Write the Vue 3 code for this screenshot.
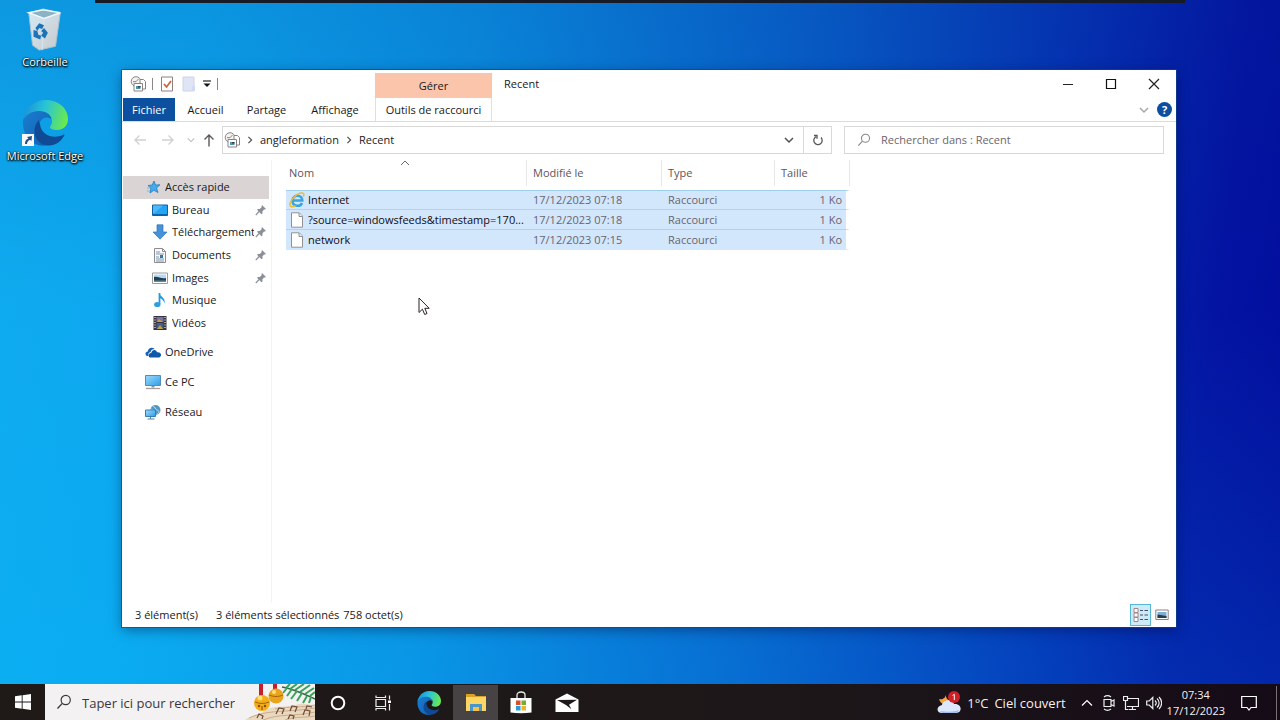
<script setup>
import { ref } from 'vue'

const tabs = ['Accueil', 'Partage', 'Affichage']
const quick = [
  { name: 'Accès rapide', icon: 'star', root: true, active: true },
  { name: 'Bureau', icon: 'desktop', pin: true },
  { name: 'Téléchargements', icon: 'download', pin: true },
  { name: 'Documents', icon: 'document', pin: true },
  { name: 'Images', icon: 'picture', pin: true },
  { name: 'Musique', icon: 'music' },
  { name: 'Vidéos', icon: 'video' }
]
const places = [
  { name: 'OneDrive', icon: 'onedrive' },
  { name: 'Ce PC', icon: 'pc' },
  { name: 'Réseau', icon: 'network' }
]
const files = [
  { name: 'Internet', icon: 'ie', date: '17/12/2023 07:18', type: 'Raccourci', size: '1 Ko' },
  { name: '?source=windowsfeeds&timestamp=170...', icon: 'file', date: '17/12/2023 07:18', type: 'Raccourci', size: '1 Ko' },
  { name: 'network', icon: 'file', date: '17/12/2023 07:15', type: 'Raccourci', size: '1 Ko' }
]
const folderQuery = ref('')
const webQuery = ref('')
</script>

<template>
  <div class="screen">
    <svg class="sprite" aria-hidden="true">
      <defs>
        <linearGradient id="edgeTop" x1="0" y1=".3" x2="1" y2=".5">
          <stop offset="0" stop-color="#1a8fd8" /><stop offset=".45" stop-color="#27c3d8" /><stop offset="1" stop-color="#6bea4c" />
        </linearGradient>
        <linearGradient id="edgeMid" x1="0" y1="0" x2="1" y2="1">
          <stop offset="0" stop-color="#1b7fd0" /><stop offset="1" stop-color="#0f5fb4" />
        </linearGradient>
        <linearGradient id="screenBlue" x1="0" y1="0" x2="1" y2="1">
          <stop offset="0" stop-color="#9adcff" /><stop offset="1" stop-color="#2f9de6" />
        </linearGradient>
        <linearGradient id="binSide" x1="0" y1="0" x2="1" y2="1">
          <stop offset="0" stop-color="#d5ecf7" /><stop offset="1" stop-color="#c7c9cc" />
        </linearGradient>
      </defs>
      <symbol id="edge" viewBox="0 0 46 46">
        <path fill="url(#edgeMid)" d="M1 20C3 11 11 7 18 8c8 1 12 6 11 11-4-3-9-1-11 3-4 8 0 17 9 22-2 2-7 2-11 1C6 42 0 32 1 20z" />
        <path fill="url(#edgeTop)" d="M1 20C3 8 12 0 24 0c13 0 22 9 22 19 0 7-5 11-11 11-4 0-7-1-7-3 0-1 2-2 2-6 0-6-6-10-13-10C9 11 4 15 1 20z" />
        <path fill="#114a94" d="M17 20c-8 8-5 22 6 25 8 2 15-2 19-9 1-1 0-2-1-1-9 4-22 1-23-11-1-2-1-3-1-4z" />
      </symbol>
      <symbol id="recent" viewBox="0 0 16 16">
        <circle cx="6" cy="5.5" r="4.8" fill="#f5f3f2" stroke="#8a8280" /><path d="M6 5.7 8.500 3M6 5.700H3" stroke="#8a8280" fill="none" />
        <path d="M10 3.500h3.500l2 2V13H10z" fill="#fff" stroke="#8a8280" /><path d="M4 7.500h8.500v7.500H4z" fill="#fff" stroke="#8a8280" />
        <path d="M6 10h4.500v3H6z" fill="#4e98ad" /><path d="M8 10h2.500v1.500H8z" fill="#323c54" />
      </symbol>
      <symbol id="star" viewBox="0 0 16 16"><path d="m9 2 1.500 4 4.500-.2-3.500 3.200 1.500 4.500-4.200-2.200L5 14l.9-4.700L3 6.500l4.200-.5z" fill="#45a9ee" stroke="#1e7fc4" stroke-width=".8" /><path d="M2 9h3M2 12h3" stroke="#75bdec" /></symbol>
      <symbol id="desktop" viewBox="0 0 16 16"><path d="M.5 3h15v10.500H.5z" fill="#24a4f5" stroke="#145f9f" /><path d="M1 12h14v1.500H1z" fill="#0c65a8" /><path d="m1 3.500 10 0-9 8H1z" fill="#4db8fa" /></symbol>
      <symbol id="download" viewBox="0 0 16 16"><path d="M5 .8h6V8h4l-7 7.200L1 8h4z" fill="#4593d8" stroke="#2b74b9" stroke-width=".7" /></symbol>
      <symbol id="document" viewBox="0 0 16 16"><path d="M2.500 1.500h8l3 3v11h-11z" fill="#fafafa" stroke="#8d8b8d" /><path d="M10.500 1.500v3h3" fill="none" stroke="#8d8b8d" /><path d="M4 5h4M4 7h8M4 10h3M4 12h8M4 14h8" stroke="#7796ad" /><path d="M8 8h3v3H8z" fill="#3b77a3" /></symbol>
      <symbol id="picture" viewBox="0 0 16 16"><path d="M.5 3h15v10.500H.5z" fill="#fff" stroke="#9c9a9b" /><path d="M2 4.500h12v7.500H2z" fill="#b6dcf4" /><path d="M2 7c4-1 7 2 12 1v4H2z" fill="#263d58" /><path d="M2 10.500h12V12H2z" fill="#53938e" /></symbol>
      <symbol id="music" viewBox="0 0 16 16"><path d="M7.500 1v11" stroke="#209be2" stroke-width="1.800" /><ellipse cx="5.300" cy="12.500" rx="3.200" ry="2.600" fill="#2f9fe3" /><path d="M7 .5c0 4 7 4.500 5.500 11C11.500 8 10 6.500 7 6z" fill="#2299df" /></symbol>
      <symbol id="video" viewBox="0 0 16 16"><path d="M1.500 1h13v14h-13z" fill="#35343d" /><path d="M4.500 2h7v5h-7z" fill="#7b6eaf" /><path d="M4.500 8h7v6h-7z" fill="#405f8e" /><path d="m5 14 3-4 3 4M5 7l2-3 4 3" fill="#c4a046" /><path d="M3 2v12M13 2v12" stroke="#ddd" stroke-width="1.300" stroke-dasharray="1 1.500" /></symbol>
      <symbol id="onedrive" viewBox="0 0 16 16"><path d="M2.500 12C-.3 11.500-.1 7.600 2.800 7.600 3 4 7 2.300 9.800 5c-2.500 0-3.900 1.300-4.200 3C3.500 8.500 3 10.500 3.500 12z" fill="#1762b4" /><path d="M5 13.500c-2.300-.8-1.600-4.500 1.200-4.500C7 5.500 11 5 12 8.300c4.500-.8 5.300 4.200 2 5.200z" fill="#0e58a9" /></symbol>
      <symbol id="pc" viewBox="0 0 16 16"><path d="M.5 1.500h15v10H.5z" fill="url(#screenBlue)" stroke="#508eb7" /><path d="M6.500 12h3v1.500h-3z" fill="#7899ad" /><path d="M1 14.500h14" stroke="#a99b99" stroke-width="1.300" /></symbol>
      <symbol id="network" viewBox="0 0 16 16"><circle cx="10.500" cy="6" r="5" fill="#5199c3" /><path d="M8 2c3 1 1 3 4 4s2 3 0 4M6 5c2 0 2 2 4 3" fill="none" stroke="#c0dbe6" /><path d="M.5 6h10v6.500H.5z" fill="url(#screenBlue)" stroke="#347eaf" /><path d="M5.500 13v2M2.500 15h7" stroke="#5383a3" /></symbol>
      <symbol id="file" viewBox="0 0 16 16"><path d="M2.500.8h7.800l3.200 3.400v11h-11z" fill="#fff" stroke="#929095" /><path d="M10 1v3.500h3.500" fill="#eee" stroke="#929095" /></symbol>
      <symbol id="ie" viewBox="0 0 16 16"><path d="M4.500 8.500h8.800c0-6-9.500-6.500-9.800.2-.2 6 8 6.500 9.500 2.300" fill="none" stroke="#39a5df" stroke-width="2.500" /><path d="M2 14.500C-2 12 7 .5 13.500 1c2 .2 1.500 2.500.7 3.500M2 14.500c1.500.8 3.200 0 4.500-.8" fill="none" stroke="#e9bd36" stroke-width="1.500" /></symbol>
      <symbol id="pin" viewBox="0 0 12 12"><path d="m7 1 4 4-1 .6-1 0-1.600 2 .1 1.800-1 .9L2 5.800 3 5l1.700 0L6.600 3.200V2z" fill="#8b8f98" /><path d="m4 7.500-3.200 3.700" stroke="#8b8f98" stroke-width="1.200" /></symbol>
      <symbol id="chev" viewBox="0 0 10 10"><path d="m1 3 4 4 4-4" fill="none" stroke="currentColor" stroke-width="1.500" /></symbol>
      <symbol id="loupe" viewBox="0 0 16 16"><circle cx="9.700" cy="6" r="4.600" fill="none" stroke="currentColor" stroke-width="1.200" /><path d="M6.300 9.400 1.500 14.500" stroke="currentColor" stroke-width="1.300" /></symbol>
    </svg>

    <main class="desktop">
      <div class="top-strip"></div>
      <div class="shortcuts">
        <button class="shortcut">
          <svg class="shortcut-icon" viewBox="0 0 46 46">
            <path d="M6 5 21 1l18 4-5 35-17 4-7-5z" fill="url(#binSide)" stroke="#abc1ce" />
            <path d="m6 5 15-3 18 3-17 6z" fill="#8ab3c3" stroke="#eef8fc" stroke-width="1.500" />
            <path d="m22 11-2 33" stroke="#dde5ea" />
            <path d="m13 21 4-5 5 2-2 4-3-1-2 3zM22 21l4 5-3 6-4-3 2-3-2-2zM18 33l-7-3 0-7 4 1 1 4 3 1z" fill="#1b73ba" />
          </svg>
          <span>Corbeille</span>
        </button>
        <button class="shortcut">
          <span class="badge-host">
            <svg class="shortcut-icon"><use href="#edge" /></svg>
            <svg class="link-badge" viewBox="0 0 12 12"><path d="M0 0h12v12H0z" fill="#f8f8fa" /><path d="M3 10C3 7 4 5.500 6.500 4.500L5 3l5-1-.6 5-1.300-1.300C6 6.500 5 8 5 10z" fill="#254d86" /></svg>
          </span>
          <span>Microsoft Edge</span>
        </button>
      </div>

      <section class="window" aria-label="Recent">
        <header class="titlebar">
          <div class="qat">
            <svg class="i16"><use href="#recent" /></svg><i class="bar"></i>
            <button aria-label="Propriétés"><svg class="i16" viewBox="0 0 16 16"><path d="M2.500 1h11v14h-11z" fill="#fff" stroke="#8d807d" /><path d="m5 8 2.500 3L12 5" fill="none" stroke="#cf602e" stroke-width="1.700" /></svg></button>
            <button aria-label="Nouveau dossier"><svg class="i16" viewBox="0 0 16 16"><path d="M2 1h11v14H2z" fill="#dfe5f5" stroke="#ccd4e8" /><path d="M11 10h3v5h-3z" fill="#d1daf0" /></svg></button>
            <button aria-label="Personnaliser"><svg class="i8" viewBox="0 0 8 8"><path d="M0 1h8" stroke="#222" stroke-width="1.200" /><path d="M.5 3.500h7L4 7z" fill="#111" /></svg></button>
            <i class="bar"></i>
          </div>
          <div class="context-title">Gérer</div>
          <h1>Recent</h1>
          <div class="controls">
            <button aria-label="Réduire"><svg viewBox="0 0 12 12"><path d="M1 6.500h10" stroke="#222" /></svg></button>
            <button aria-label="Agrandir"><svg viewBox="0 0 12 12"><path d="M1.500 1.500h9v9h-9z" fill="none" stroke="#111" stroke-width="1.200" /></svg></button>
            <button aria-label="Fermer"><svg viewBox="0 0 12 12"><path d="m1 1 10 10M11 1 1 11" stroke="#222" stroke-width="1.200" /></svg></button>
          </div>
        </header>

        <nav class="ribbon" aria-label="Ruban">
          <button class="file-tab">Fichier</button>
          <button v-for="t in tabs" :key="t" class="tab">{{ t }}</button>
          <button class="context-tab">Outils de raccourci</button>
          <div class="ribbon-end">
            <button aria-label="Développer le ruban" class="expand"><svg class="i10"><use href="#chev" /></svg></button>
            <button aria-label="Aide" class="help">?</button>
          </div>
        </nav>

        <div class="address-row">
          <div class="history">
            <button aria-label="Précédent"><svg viewBox="0 0 14 14"><path d="M13 7H2m4.500-4.500L2 7l4.500 4.500" /></svg></button>
            <button aria-label="Suivant"><svg viewBox="0 0 14 14"><path d="M1 7h11M7.500 2.500 12 7l-4.500 4.500" /></svg></button>
            <button aria-label="Récents" class="small"><svg class="i8"><use href="#chev" /></svg></button>
            <button aria-label="Dossier parent" class="up"><svg viewBox="0 0 14 14"><path d="M7 13.500V2M2.500 6.500 7 2l4.500 4.500" /></svg></button>
          </div>
          <div class="address">
            <svg class="i16"><use href="#recent" /></svg>
            <svg class="i8 side"><use href="#chev" /></svg>
            <a href="#">angleformation</a>
            <svg class="i8 side"><use href="#chev" /></svg>
            <a href="#">Recent</a>
            <button aria-label="Emplacements précédents" class="drop"><svg class="i10"><use href="#chev" /></svg></button>
            <button aria-label="Actualiser" class="refresh"><svg class="i12" viewBox="0 0 12 12"><path d="M9 3.500A4.200 4.200 0 1 1 4 2.700M2 1.500h3v3.200" fill="none" stroke="#5c5553" stroke-width="1.300" /></svg></button>
          </div>
          <label class="folder-search">
            <svg class="i14"><use href="#loupe" /></svg>
            <input v-model="folderQuery" type="text" aria-label="Rechercher dans : Recent" placeholder="Rechercher dans : Recent">
          </label>
        </div>

        <div class="body">
          <nav class="tree" aria-label="Volet de navigation">
            <ul class="quick">
              <li v-for="q in quick" :key="q.name">
                <a href="#" :class="{ root: q.root, active: q.active }">
                  <svg class="i16"><use :href="'#' + q.icon" /></svg>
                  <span>{{ q.name }}</span>
                  <svg v-if="q.pin" class="i12"><use href="#pin" /></svg>
                </a>
              </li>
            </ul>
            <ul class="places">
              <li v-for="p in places" :key="p.name">
                <a href="#" class="root"><svg class="i16"><use :href="'#' + p.icon" /></svg><span>{{ p.name }}</span></a>
              </li>
            </ul>
          </nav>
          <div class="listing">
            <table>
              <colgroup><col class="c-name"><col class="c-date"><col class="c-type"><col class="c-size"></colgroup>
              <thead>
                <tr>
                  <th>Nom<svg class="sort" viewBox="0 0 10 6"><path d="m1 5 4-4 4 4" fill="none" stroke="#666" /></svg></th>
                  <th>Modifié le</th><th>Type</th><th>Taille</th>
                </tr>
              </thead>
              <tbody>
                <tr v-for="f in files" :key="f.name">
                  <td class="name"><div><svg class="i16"><use :href="'#' + f.icon" /></svg><span>{{ f.name }}</span></div></td>
                  <td>{{ f.date }}</td><td>{{ f.type }}</td><td class="size">{{ f.size }}</td>
                </tr>
              </tbody>
            </table>
          </div>
        </div>

        <footer class="status">
          <span>3 élément(s)</span><span class="sel">3 éléments sélectionnés</span><span>758 octet(s)</span>
          <div class="views">
            <button class="on" aria-label="Détails"><svg class="i16" viewBox="0 0 16 16"><path d="M1 1.500h4v4H1zM1 6h4v4H1zM1 10.500h4v4H1z" fill="#fff" stroke="#a88288" /><path d="M7 3.500h3M11.500 3.500H15M7 8h3M11.500 8H15M7 12.500h3M11.500 12.500H15" stroke="#475363" stroke-width="1.200" /></svg></button>
            <button aria-label="Grandes icônes"><svg class="i14" viewBox="0 0 14 14"><path d="M.8 2h12.400v9.500H.8z" fill="#fff" stroke="#8f7e83" /><path d="M2.500 4h9v6h-9z" fill="#7faed5" /><path d="M2.500 6.500 11.500 8v2h-9z" fill="#263d4c" /></svg></button>
          </div>
        </footer>
      </section>

      <svg class="cursor" viewBox="0 0 12 19"><path d="M1 1v14.500l3.400-3.300 2.300 5.300 2.300-1-2.200-5.200h4.400z" fill="#fff" stroke="#2b2324" /></svg>
    </main>

    <footer class="taskbar">
      <button class="start" aria-label="Démarrer"><svg class="i16" viewBox="0 0 16 16"><path d="m0 2.300 6.700-1v6.300H0zM7.600 1.200 16 0v7.600H7.600zM0 8.400h6.700v6.300l-6.700-1zM7.600 8.400H16V16l-8.400-1.200z" fill="#fff" /></svg></button>
      <label class="web-search">
        <svg class="i16"><use href="#loupe" /></svg>
        <input v-model="webQuery" type="text" aria-label="Taper ici pour rechercher" placeholder="Taper ici pour rechercher">
        <svg class="festive" viewBox="0 0 70 36">
          <path d="M0 36c10-7 16-5 20-10 10-5 20-2 30-5s13 0 20 0v15z" fill="#ead9bf" />
          <path d="M4 34c20-9 36-5 66-10M18 36c17-7 31-3 52-8M30 25c15-3 24-1 40-4M40 36c10-4 20-2 30-4" fill="none" stroke="#bda185" stroke-width=".8" />
          <path d="m31 30 3-6 5 1-2 5M45 27l2-5 5 1-2 5M58 31l2-5 5 1-1 5M12 34l2-4 4 2-1 3M43 35l2-4 4 1-1 3M61 25l1-3 5 1" fill="none" stroke="#724b34" stroke-width="1.200" />
          <path d="M37 3c12 2 22 7 33 12" fill="none" stroke="#376444" stroke-width="1.500" />
          <path d="m41 4 4-4M45 5l7-5M50 6l9-6M55 8l10-7M60 10l9-6M65 12l5-4M42 4l-4 5M47 5l-5 7M52 7l-6 8M57 9l-5 8M62 12l-4 7M66 13l-2 6" stroke="#39a25b" stroke-width="2" />
          <path d="M14 0h4v12h-4zM28 0h4v6h-4z" fill="#c4202b" />
          <circle cx="31" cy="12" r="7.500" fill="#e9a51a" /><circle cx="17" cy="19" r="8" fill="#f2ae16" />
          <path d="M10 18c5 2 9 2 14 0M24 11c5 2 9 2 14 0" fill="none" stroke="#a95f12" />
          <circle cx="15" cy="14" r="2.500" fill="#fce17a" /><circle cx="29" cy="8" r="2" fill="#fce17a" /><circle cx="14" cy="22" r="1.200" fill="#8d4511" /><circle cx="20" cy="22" r="1.200" fill="#8d4511" /><path d="M17 22v4" stroke="#8d4511" />
        </svg>
      </label>
      <div class="apps">
        <button aria-label="Cortana"><svg class="i16" viewBox="0 0 16 16"><circle cx="8" cy="8" r="6.300" fill="none" stroke="#fff" stroke-width="2" /></svg></button>
        <button aria-label="Affichage des tâches"><svg class="i16" viewBox="0 0 16 16"><path d="M1 4.500h9.500v7H1zM1 .5v2h9.500v-2M1 15.500v-2h9.500v2M14.500.5v4M14.500 9v6.500" fill="none" stroke="#eee" stroke-width="1.200" /><path d="M13 5.500h3v2.500h-3z" fill="#fff" /></svg></button>
        <button aria-label="Microsoft Edge" class="wide"><svg class="i24"><use href="#edge" /></svg></button>
        <button aria-label="Explorateur de fichiers" class="open"><svg class="i24" viewBox="0 0 24 24"><path d="M2 3h8l2 2h10v15H2z" fill="#dda21f" /><path d="M2 6h20v14H2z" fill="#fbd565" /><path d="M6 13h12v7h-3v-4H9v4H6z" fill="#4b96c6" /><path d="M9 16h6v4H9z" fill="#f5c24e" /></svg></button>
        <button aria-label="Microsoft Store"><svg class="i24" viewBox="0 0 24 24"><path d="M8 8V4c0-4 8-4 8 0v4" fill="none" stroke="#e9e9e9" stroke-width="1.300" /><path d="M1.500 7h21v14.500c-7 1-14 1-21 0z" fill="#fff" /><path d="M7 9.500h4.500V14H7z" fill="#df4c2c" /><path d="M12.500 9.500H17V14h-4.500z" fill="#75ad31" /><path d="M7 15h4.500v4.500H7z" fill="#269ed9" /><path d="M12.500 15H17v4.500h-4.500z" fill="#edb42e" /></svg></button>
        <button aria-label="Courrier"><svg class="i24" viewBox="0 0 24 24"><path d="m.5 8.500 11.500-6 11.500 6V21H.5z" fill="#fff" /><path d="m2 9 20-.3-8 5 2.500 4.500L11 14z" fill="#1e1918" /></svg></button>
      </div>
      <div class="tray">
        <button class="weather">
          <svg class="i24" viewBox="0 0 24 24"><path d="M9 2c-1 6 3 9 8 7-1 5-13 7-15-1 4 1 7-1 7-6z" fill="#f2a63d" /><path d="M5 22c-6 0-6-7 0-8 1-6 11-6 12-1 8-1 9 9 2 9z" fill="#dce7fb" /><path d="M3 20c7 1 14 1 19-1-1 2-2 3-4 3H5z" fill="#a6bbed" /><circle cx="17" cy="6" r="6" fill="#cf2027" /><path d="m15.500 4.500 1.800-1.200V9" fill="none" stroke="#fff" /></svg>
          <span>1°C</span><span>Ciel couvert</span>
        </button>
        <button aria-label="Icônes cachées"><svg class="i12" viewBox="0 0 12 12"><path d="m1 8.500 5-5 5 5" fill="none" stroke="#fff" stroke-width="1.200" /></svg></button>
        <button aria-label="Conférence"><svg class="i16" viewBox="0 0 16 16"><path d="M4 4.500h7v7H4zM11 6.500l3-1.500v6l-3-1.500M4 2c2-1.500 5-1.500 7 0M4 14c2 1.500 5 1.500 7 0" fill="none" stroke="#eee" stroke-width="1.200" /></svg></button>
        <button aria-label="Réseau"><svg class="i16" viewBox="0 0 16 16"><path d="M4 3.500h11.500v8H4M9.500 12v2.500M6 14.500h7M2.500 6v8.500h3M.5 1.500h4v4h-4z" fill="none" stroke="#eee" stroke-width="1.200" /></svg></button>
        <button aria-label="Volume"><svg class="i16" viewBox="0 0 16 16"><path d="M.7 6h2.500l3.600-3.500v11L3.200 10H.7zM9 5.500c1.500 1.500 1.500 3.500 0 5M11 3.500c2.800 2.500 2.800 6.500 0 9M13 2c3.500 3.500 3.500 8.500 0 12" fill="none" stroke="#eee" stroke-width="1.200" /></svg></button>
        <button class="clock"><time>07:34</time><time>17/12/2023</time></button>
        <button class="notice" aria-label="Notifications"><svg class="i16" viewBox="0 0 16 16"><path d="M.7 1.500h14.600v11H10l-2 2.500-2-2.500H.7z" fill="none" stroke="#fff" stroke-width="1.200" /></svg></button>
        <button class="peek" aria-label="Afficher le bureau"></button>
      </div>
    </footer>
  </div>
</template>

<style>
html, body { margin: 0; }
</style>

<style scoped>
* { box-sizing: border-box; }
.screen { height: 100vh; display: flex; flex-direction: column; overflow: hidden; font-family: "Open Sans", "Noto Sans", sans-serif; font-size: 11px; line-height: 16px; color: #20181b; }
button { font: inherit; color: inherit; background: none; border: 0; padding: 0; display: flex; align-items: center; justify-content: center; }
a { color: inherit; text-decoration: none; }
input { font: inherit; color: inherit; border: 0; outline: 0; background: none; padding: 0; min-width: 0; flex: 1; }
svg { flex: none; display: block; }
ul { list-style: none; margin: 0; padding: 0; }
.sprite { position: absolute; width: 0; height: 0; }
.i8 { width: 8px; height: 8px; }
.i10 { width: 10px; height: 10px; }
.i12 { width: 12px; height: 12px; }
.i14 { width: 14px; height: 14px; }
.i16 { width: 16px; height: 16px; }
.i24 { width: 24px; height: 24px; }

.desktop { position: relative; flex: 1; background: linear-gradient(180deg, rgba(0, 40, 130, .14), rgba(0, 120, 255, 0) 45%, rgba(0, 200, 255, .14)), linear-gradient(97deg, #0fabf0 0%, #0ca7ef 15%, #0a8fe2 36%, #0860cb 60%, #0530b4 80%, #0313a2 92%, #020c9c 100%); }
.top-strip { position: absolute; top: 0; left: 95px; right: 95px; height: 3px; background: #171b25; }
.shortcuts { width: 90px; padding-top: 8px; display: flex; flex-direction: column; gap: 30px; }
.shortcut { flex-direction: column; gap: 2px; color: #fff; white-space: nowrap; text-shadow: 1px 1px 2px #000, 0 1px 2px #000, 0 0 2px #000; }
.shortcut-icon { width: 46px; height: 46px; }
.shortcut:first-child .shortcut-icon { width: 44px; height: 44px; }
.badge-host { position: relative; }
.link-badge { position: absolute; left: 0; bottom: 0; width: 12px; height: 12px; }

.window { position: absolute; left: 122px; right: 104px; top: 70px; bottom: 57px; background: #fff; display: flex; flex-direction: column; box-shadow: 0 0 0 1px rgba(10, 70, 140, .65), 0 3px 12px rgba(0, 0, 40, .4); }
.titlebar { height: 28px; display: flex; align-items: center; }
.qat { width: 253px; padding-left: 8px; display: flex; align-items: center; gap: 6px; }
.bar { width: 1px; height: 12px; background: #8d8587; }
.context-title { width: 117px; height: 25px; align-self: flex-end; display: flex; align-items: center; justify-content: center; background: #fbc5ab; }
h1 { margin: 0 0 0 12px; font-size: 11px; font-weight: 400; }
.controls { margin: 0 1px 0 auto; display: flex; }
.controls button { width: 43px; height: 28px; }
.controls svg { width: 12px; height: 12px; }

.ribbon { height: 24px; display: flex; align-items: stretch; border-bottom: 1px solid #dcdadb; }
.file-tab { width: 52px; margin-left: 1px; background: #0c509f; color: #fff; }
.tab { width: 61px; }
.tab:nth-child(4) { width: 78px; padding-right: 2px; }
.context-tab { width: 117px; border: solid #e2dfe0; border-width: 0 1px; }
.ribbon-end { margin-left: auto; display: flex; align-items: center; gap: 8px; padding-right: 4px; }
.expand { color: #a9a5a7; }
.help { width: 15px; height: 15px; border-radius: 50%; background: #0d4f9f; color: #fff; font-weight: 700; }

.address-row { height: 38px; padding: 4px 12px 6px 11px; display: flex; }
.history { width: 89px; flex: none; display: flex; align-items: center; gap: 14px; }
.history svg { width: 14px; height: 14px; fill: none; stroke: #d3d0d1; stroke-width: 1.4; }
.history .small { width: 4px; color: #c5c3c4; }
.history .small svg { width: 8px; height: 8px; }
.history .up svg { stroke: #5d5657; }
.history .up { margin-left: -5px; }
.address { flex: 1; min-width: 0; display: flex; align-items: center; border: 1px solid #dad8d9; padding-left: 1px; gap: 6px; white-space: nowrap; }
.side { transform: rotate(-90deg); color: #554f50; }
.drop { margin-left: auto; width: 16px; color: #554f50; }
.refresh { width: 28px; align-self: stretch; border-left: 1px solid #dad8d9; }
.folder-search { flex: 0 1 320px; margin-left: 12px; display: flex; align-items: center; gap: 10px; padding-left: 12px; border: 1px solid #dad8d9; color: #8a8586; }
.folder-search input::placeholder { color: #6f6469; opacity: 1; }

.body { flex: 1; min-height: 0; display: flex; }
.tree { width: 150px; flex: none; padding: 16px 2px 0 1px; border-right: 1px solid #f4f3f3; }
.quick { height: 158px; display: grid; grid-template-columns: minmax(0, 1fr); grid-auto-rows: 1fr; }
.tree li { display: flex; }
.tree a { flex: 1; display: flex; align-items: center; gap: 4px; padding: 0 2px 0 29px; min-width: 0; white-space: nowrap; }
.tree a.root { padding-left: 22px; }
.tree a.active { background: #dad5d4; }
.tree span { flex: 1; min-width: 0; overflow: hidden; }
.tree .i12 { margin-left: -3px; }
.places { margin-top: 3px; }
.places li { height: 30px; }
.listing { flex: 1; min-width: 0; padding-left: 14px; }
table { border-collapse: separate; border-spacing: 0; table-layout: fixed; width: 564px; }
.c-name { width: 241px; }
.c-date { width: 135px; }
.c-type { width: 113px; }
.c-size { width: 75px; }
th { position: relative; height: 26px; padding: 0 6px; text-align: left; font-weight: 400; color: #5d5559; border-right: 1px solid #e9e7e7; }
th:first-child { padding-left: 3px; }
.sort { position: absolute; top: 0; left: 114px; width: 10px; height: 6px; }
thead::after { content: ""; display: block; height: 4px; }
td { height: 20px; padding: 0 6px; background: #d2e6fc; color: #6b646d; border-bottom: 1px solid #add6ee; white-space: nowrap; }
tbody tr:first-child td { border-top: 1px solid #9fd0ea; }
tbody tr:last-child td { border-bottom-color: #d2e6fc; }
td.name { padding: 0 3px; color: #120c10; }
td.name div { display: flex; align-items: center; gap: 3px; }
td.size { padding-right: 4px; text-align: right; border-right: 4px solid #fff; background-clip: padding-box; }
tbody tr:first-child td.size, tbody tr:last-child td.size { border-right-color: #fff; }

.status { height: 24px; display: flex; align-items: center; padding: 0 4px 0 13px; }
.sel { margin: 0 4px 0 18px; }
.views { margin-left: auto; display: flex; }
.views button { width: 21px; height: 22px; }
.views .on { background: #cdebf7; border: 1px solid #55b6d5; }
.cursor { position: absolute; left: 418px; top: 297px; width: 12px; height: 19px; }

.taskbar { height: 36px; flex: none; display: flex; color: #f4f0f2; background: linear-gradient(90deg, #1f1a17, #1d1719 60%, #150b17); font-size: 13px; }
.start { width: 45px; }
.web-search { width: 270px; display: flex; align-items: center; padding-left: 11px; gap: 10px; background: #f3f1f1; color: #39373c; }
.web-search input { padding-top: 2px; }
.web-search input::placeholder { color: #39373c; opacity: 1; }
.festive { width: 70px; height: 36px; }
.apps { display: flex; padding-top: 1px; }
.apps button { width: 45px; }
.apps .wide { width: 48px; }
.apps .open { background: #474243; }
.apps button:nth-child(n+5) { width: 46px; }
.tray { margin-left: auto; padding-top: 2px; display: flex; align-items: center; gap: 7px; white-space: nowrap; }
.weather { gap: 6px; margin-right: 8px; }
.clock { flex-direction: column; font-size: 11px; line-height: 16px; margin-left: -2px; }
.notice { margin-left: 9px; }
.peek { align-self: stretch; width: 4px; margin-left: 12px; border-left: 1px solid #777077; }
</style>
